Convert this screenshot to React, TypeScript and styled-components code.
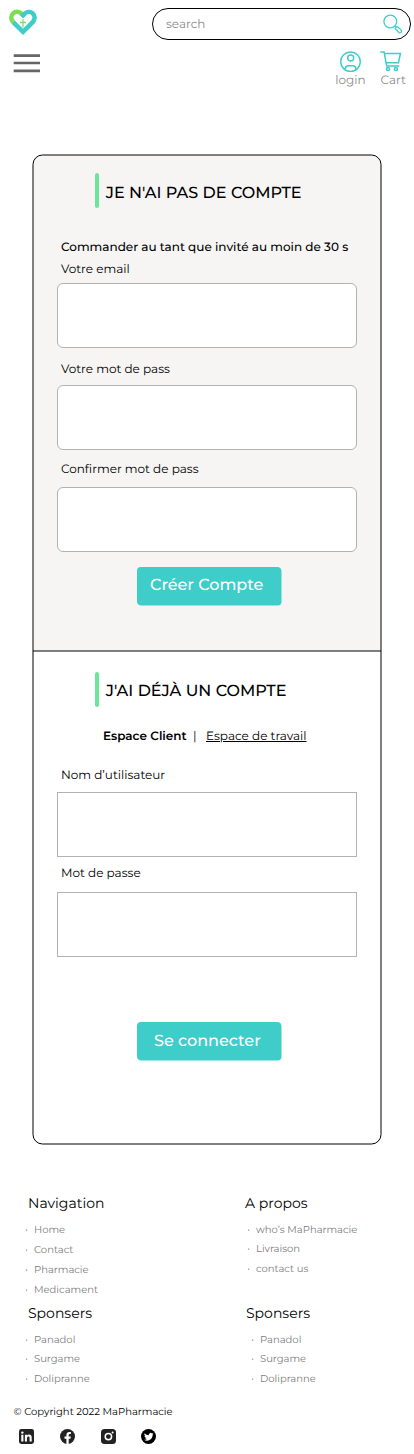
import React from 'react';
import styled, { createGlobalStyle } from 'styled-components';

const TEAL = '#3ecdc9';

const GlobalStyle = createGlobalStyle`
  *, *::before { box-sizing: border-box; }
  body {
    margin: 0;
    background: #fff;
    color: #000;
    font-family: Montserrat, Inter, sans-serif;
    text-rendering: geometricPrecision;
  }
  h2, h3, p, ul { margin: 0; padding: 0; font-weight: 400; }
`;

const Page = styled.div`
  width: 414px;
  height: 1454px;
  overflow: hidden;
`;

const Header = styled.header`
  height: 155px;
  padding: 8px 3px 0 8px;
`;

const TopRow = styled.div`
  display: flex;
  justify-content: space-between;
  height: 32px;
`;

const SearchBox = styled.label`
  display: flex;
  align-items: center;
  justify-content: space-between;
  width: 259px;
  height: 32px;
  padding: 0 7px 0 13px;
  border: 1px solid #000;
  border-radius: 16px;
`;

const SearchInput = styled.input`
  width: 150px;
  padding: 2px 0 0;
  border: 0;
  outline: 0;
  background: none;
  font: 400 12px/20px Montserrat, Inter, sans-serif;
  text-rendering: geometricPrecision;
  &::placeholder { color: #8c8c8c; opacity: 1; }
`;

const ToolRow = styled.div`
  display: flex;
  justify-content: space-between;
  padding: 10px 4.5px 0 6px;
`;

const Actions = styled.nav`
  display: flex;
  gap: 15px;
`;

const Action = styled.a`
  display: flex;
  flex-direction: column;
  gap: 1px;
  color: #8c8c8c;
  font-size: 12px;
  line-height: 16px;
  svg { display: block; }
`;

/* The frame is a hairline drawn half a pixel off the grid. */
const Card = styled.main`
  position: relative;
  z-index: 0;
  width: 348px;
  margin-left: 33px;

  &::before {
    content: '';
    position: absolute;
    z-index: -1;
    top: 0;
    left: 0;
    width: 349px;
    height: 990px;
    transform: translate(-0.5px, -0.5px);
    border: 1px solid #000;
    border-radius: 10px;
    background: linear-gradient(#f6f5f4 496px, #fff 496px);
  }
`;

const Panel = styled.section<{ $first?: boolean }>`
  position: relative;
  height: ${(p) => (p.$first ? 496 : 493)}px;
  padding: ${(p) => (p.$first ? 18 : 21)}px 24px 0;

  &::before {
    content: '';
    display: ${(p) => (p.$first ? 'none' : 'block')};
    position: absolute;
    top: -1px;
    left: 0;
    right: 0;
    height: 2px;
    background: rgba(0, 0, 0, 0.5);
  }
`;

const Heading = styled.div<{ $drop: number }>`
  display: flex;
  gap: 6.7px;
  height: 35px;
  margin-left: 38px;

  &::before {
    content: '';
    width: 4px;
    border-radius: 2px;
    background: #6be59a;
  }
  h2 {
    padding-top: ${(p) => p.$drop}px;
    font-size: 16px;
    font-weight: 500;
    line-height: 20px;
    letter-spacing: 0.02px;
  }
`;

const Intro = styled.p`
  margin: 30px 0 2px 4px;
  font-size: 12px;
  font-weight: 500;
  line-height: 20px;
`;

const Tabs = styled.div`
  display: flex;
  margin: 20px 0 19px 46px;
  font-size: 12px;
  line-height: 20px;
  b { width: 90px; font-weight: 600; }
  span { width: 13px; }
`;

const Field = styled.label<{ $gap: number; $after?: number; $square?: boolean }>`
  display: block;
  margin-bottom: ${(p) => p.$after ?? 0}px;
  font-size: 12px;
  line-height: 20px;
  span { display: block; padding-left: 4px; }
  input {
    display: block;
    width: 300px;
    height: 65px;
    margin-top: ${(p) => p.$gap}px;
    padding: 0 12px;
    border: 1px solid #b2b2b2;
    border-radius: ${(p) => (p.$square ? 0 : 6)}px;
    background: #fff;
  }
`;

const Submit = styled.button<{ $top: number; $indent: number; $drop: number }>`
  display: block;
  width: 144px;
  height: 38px;
  margin: ${(p) => p.$top}px 0 0 80px;
  padding: ${(p) => p.$drop}px 0 0 ${(p) => p.$indent}px;
  border: 0;
  border-radius: 4px;
  box-shadow: 0.5px 0.5px 0 ${TEAL};
  background: ${TEAL};
  color: #fff;
  font: 500 16px/20px Montserrat, Inter, sans-serif;
  text-rendering: geometricPrecision;
  text-align: left;
`;

const Footer = styled.footer`
  padding-top: 49px;
`;

const Columns = styled.div`
  display: grid;
  grid-template-columns: 218px 196px;
  grid-template-rows: 110px 99px;
`;

const Group = styled.div<{ $head: number; $list: number }>`
  h3 {
    padding-left: ${(p) => p.$head}px;
    font-size: 14px;
    line-height: 20px;
  }
  ul {
    padding: 7px 0 0 ${(p) => p.$list}px;
    list-style: none;
    color: #7c7c7c;
    font-size: 10px;
  }
`;

const Item = styled.li<{ $h: number }>`
  display: flex;
  height: ${(p) => p.$h}px;
  line-height: 20px;
  &::before {
    content: '•';
    width: 8.5px;
    color: #222;
    font-size: 7px;
    line-height: 19px;
  }
`;

const Copyright = styled.p`
  padding: 0 0 7px 13.5px;
  font-size: 10px;
  line-height: 20px;
`;

const Socials = styled.div`
  display: flex;
  gap: 26px;
  padding-left: 19px;
  svg { display: block; }
  svg:last-child { margin-left: -1px; }
`;

function Links({ title, items, heights, head, list }: { title: string; items: string[]; heights: number[]; head: number; list: number }) {
  return (
    <Group $head={head} $list={list}>
      <h3>{title}</h3>
      <ul>
        {items.map((t, i) => <Item key={t} $h={heights[i]}>{t}</Item>)}
      </ul>
    </Group>
  );
}

const Logo = () => (
  <svg width="30" height="28" viewBox="0 0 30 28" fill="none" strokeWidth="4.5">
    <path d="M5.2 14.1 L15 23.8 L24.7 14.1 C27.3 11.3 27.3 7.7 24.8 5.4 C22.2 3.1 18.8 3.6 16.6 5.7 L13.6 8.7" stroke={TEAL} />
    <path d="M5.4 14.3 C2.6 11.5 2.6 7.7 5.1 5.4 C7.6 3.1 11 3.5 13.2 5.5 L14.4 6.7" stroke="#7fdc55" />
    <path d="M13.6 8.7 L16.6 5.7" stroke={TEAL} />
    <path d="M15 11v8.5M12 14.5h6" stroke="#83dd6c" strokeWidth="1.3" />
  </svg>
);

const Menu = () => (
  <svg width="26" height="24" viewBox="0 0 26 24" overflow="visible">
    <path d="M-.3 5.7H26M-.3 13H26M-.3 20.9H26" stroke="#666" strokeWidth="2.7" />
  </svg>
);

const Magnifier = () => (
  <svg width="20" height="20" viewBox="0 0 20 20" fill="none" stroke={TEAL} strokeWidth="1.3">
    <circle cx="7.3" cy="7.5" r="6.4" />
    <path d="M11.8 12.2l1.3 1.2" />
    <path d="M12.8 15.2l3 3.2c1.5 1.3 3.6-.7 2.3-2.3l-3.1-3c-1.4-1.2-3.4.7-2.2 2.1z" />
  </svg>
);

const UserIcon = () => (
  <svg width="30" height="22" viewBox="0 0 30 22" fill="none" stroke={TEAL} strokeWidth="1.5">
    <circle cx="15.5" cy="11.7" r="9.8" />
    <circle cx="15.7" cy="8.1" r="3" />
    <path d="M10.4 19.8v-1c0-1.9 1.2-3 3-3h4.4c1.8 0 3 1.1 3 3v1" />
  </svg>
);

const CartIcon = () => (
  <svg width="26" height="22" viewBox="0.7 0 26 22" fill="none" stroke={TEAL} strokeWidth="1.5" overflow="visible">
    <path d="M0 2h3.8l2.6 14.1h12.7M4.2 3.6h15.9l-1.9 9.2H5.8" />
    <circle cx="7.7" cy="18.9" r="1.5" />
    <circle cx="15.6" cy="18.9" r="1.5" />
  </svg>
);

const LinkedIn = () => (
  <svg width="15" height="15" viewBox="0 0 15 15">
    <rect width="15" height="15" rx="2.4" fill="#222" />
    <path d="M2.3 5.8h2.1v6.6H2.3zM5.9 5.8h2v.9c.4-.7 1.1-1.1 2.1-1.1 1.9 0 2.7 1.2 2.7 3.2v3.6h-2.1V9.2c0-1-.3-1.7-1.2-1.7-1 0-1.4.7-1.4 1.7v3.2H5.9z" fill="#fff" />
    <circle cx="3.35" cy="3.6" r="1.2" fill="#fff" />
  </svg>
);

const Facebook = () => (
  <svg width="15" height="15" viewBox="0 0 15 15">
    <circle cx="7.5" cy="7.5" r="7.5" fill="#222" />
    <path d="M6.4 15V9.7H4.5V7.5h1.9V5.9c0-1.9 1.1-3 2.8-3 .8 0 1.7.15 1.7.15v1.85H10c-.9 0-1.3.6-1.3 1.2v1.4h2.1l-.35 2.2H8.7V15z" fill="#fff" />
  </svg>
);

const Instagram = () => (
  <svg width="15" height="15" viewBox="0 0 15 15">
    <rect width="15" height="15" rx="3.5" fill="#222" />
    <circle cx="7.4" cy="7.6" r="3.2" fill="none" stroke="#fff" strokeWidth="1.5" />
    <circle cx="11.6" cy="3.4" r="1" fill="#fff" />
  </svg>
);

const Twitter = () => (
  <svg width="15" height="15" viewBox="0 0 15 15">
    <circle cx="7.5" cy="7.5" r="7.5" fill="#000" />
    <g transform="translate(3 3) scale(.4)">
      <path fill="#fff" d="M23.95 4.57a10 10 0 0 1-2.82.77 4.96 4.96 0 0 0 2.16-2.72c-.95.55-2 .95-3.13 1.18a4.92 4.92 0 0 0-8.38 4.48C7.69 8.09 4.07 6.13 1.64 3.16a4.92 4.92 0 0 0 1.52 6.57 4.9 4.9 0 0 1-2.23-.61v.06a4.92 4.92 0 0 0 3.95 4.83 5 5 0 0 1-2.21.08 4.94 4.94 0 0 0 4.6 3.42A9.87 9.87 0 0 1 0 19.54a13.99 13.99 0 0 0 7.55 2.21c9.05 0 14-7.5 14-13.98 0-.21 0-.42-.02-.63a9.94 9.94 0 0 0 2.46-2.55z" />
    </g>
  </svg>
);

export default function App() {
  return (
    <Page>
      <GlobalStyle />
      <Header>
        <TopRow>
          <Logo />
          <SearchBox>
            <SearchInput placeholder="search" />
            <Magnifier />
          </SearchBox>
        </TopRow>
        <ToolRow>
          <Menu />
          <Actions>
            <Action><UserIcon />login</Action>
            <Action><CartIcon />Cart</Action>
          </Actions>
        </ToolRow>
      </Header>

      <Card>
        <Panel $first>
          <Heading $drop={11}><h2>JE N'AI PAS DE COMPTE</h2></Heading>
          <Intro>Commander au tant que invité au moin de 30 s</Intro>
          <Field $gap={3} $after={12}><span>Votre email</span><input type="email" /></Field>
          <Field $gap={5} $after={10}><span>Votre mot de pass</span><input type="password" /></Field>
          <Field $gap={7}><span>Confirmer mot de pass</span><input type="password" /></Field>
          <Submit $top={15} $indent={13} $drop={0}>Créer Compte</Submit>
        </Panel>
        <Panel>
          <Heading $drop={10}><h2>J'AI DÉJÀ UN COMPTE</h2></Heading>
          <Tabs><b>Espace Client</b><span>|</span><u>Espace de travail</u></Tabs>
          <Field $square $gap={6} $after={7}><span>Nom d’utilisateur</span><input /></Field>
          <Field $square $gap={8}><span>Mot de passe</span><input type="password" /></Field>
          <Submit $top={65} $indent={17} $drop={2}>Se connecter</Submit>
        </Panel>
      </Card>

      <Footer>
        <Columns>
          <Links title="Navigation" items={['Home', 'Contact', 'Pharmacie', 'Medicament']} heights={[20, 20, 20, 20]} head={28} list={25.5} />
          <Links title="A propos" items={['who’s MaPharmacie', 'Livraison', 'contact us']} heights={[19, 20, 20]} head={27} list={29.5} />
          <Links title="Sponsers" items={['Panadol', 'Surgame', 'Dolipranne']} heights={[19, 20, 20]} head={28} list={25.5} />
          <Links title="Sponsers" items={['Panadol', 'Surgame', 'Dolipranne']} heights={[19, 20, 20]} head={28} list={33.5} />
        </Columns>
        <Copyright>© Copyright 2022 MaPharmacie</Copyright>
        <Socials>
          <LinkedIn />
          <Facebook />
          <Instagram />
          <Twitter />
        </Socials>
      </Footer>
    </Page>
  );
}
